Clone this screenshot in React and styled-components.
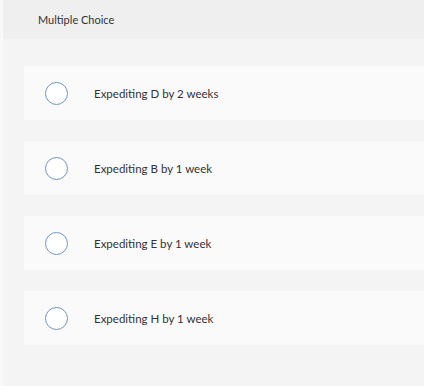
import React from 'react';
import styled, { createGlobalStyle } from 'styled-components';

const GlobalStyle = createGlobalStyle`
  html, body {
    margin: 0;
    padding: 0;
    background: #f8f8f8;
  }
  body {
    font-family: Lato, "Liberation Sans", sans-serif;
    color: #333;
  }
`;

const Page = styled.div`
  width: 424px;
  height: 386px;
  padding-left: 3px;
  box-sizing: border-box;
  display: flex;
  flex-direction: column;
`;

const Header = styled.div`
  height: 39px;
  background: #efefef;
  display: flex;
  align-items: center;
  padding-left: 35px;
  font-size: 11px;
  color: #333;
`;

const Body = styled.div`
  flex: 1;
  background: #f4f4f4;
  padding: 27px 0 0 21px;
  display: flex;
  flex-direction: column;
  gap: 21px;
`;

const Option = styled.label`
  height: 54px;
  background: #fafafa;
  display: flex;
  align-items: center;
  padding-left: 21px;
  cursor: pointer;
`;

const Radio = styled.span`
  width: 21px;
  height: 21px;
  border-radius: 50%;
  border: 1px solid #6d95c6;
  background: #fff;
  flex-shrink: 0;
`;

const Label = styled.span`
  margin-left: 26px;
  font-size: 11.5px;
  color: #333;
`;

const options = [
  'Expediting D by 2 weeks',
  'Expediting B by 1 week',
  'Expediting E by 1 week',
  'Expediting H by 1 week',
];

export default function App() {
  return (
    <>
      <GlobalStyle />
      <Page>
        <Header>Multiple Choice</Header>
        <Body>
          {options.map((text) => (
            <Option key={text}>
              <Radio />
              <Label>{text}</Label>
            </Option>
          ))}
        </Body>
      </Page>
    </>
  );
}
